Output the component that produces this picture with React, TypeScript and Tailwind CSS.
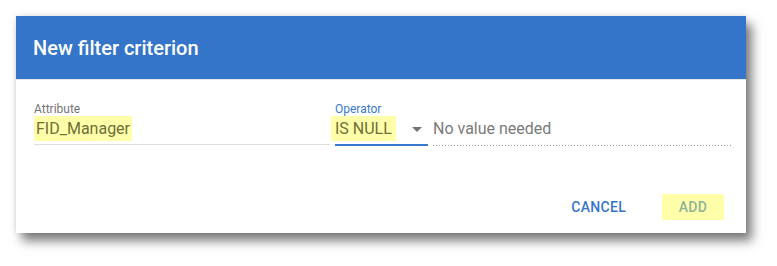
export default function App() {
  return (
    <div className="h-[266px] w-[777px] bg-white pl-[16px] pt-[16px] font-['Roboto',sans-serif]">
      <div className="flex h-[217px] w-[730px] flex-col bg-white shadow-[6px_8px_10px_rgba(0,0,0,0.5),0_0_6px_rgba(0,0,0,0.12)]">
        {/* header */}
        <div className="flex h-[64px] items-center border-b border-[#e6e6e6] bg-[#3575c9] pl-[17px]">
          <h2 className="text-[20px] font-medium text-white">New filter criterion</h2>
        </div>

        {/* fields */}
        <div className="flex gap-[5px] pl-[18px] pt-[22px]">
          <div className="w-[296px]">
            <div className="text-[12px] leading-[14px] text-[#757575]">Attribute</div>
            <div className="h-[29px] border-b border-[#dedede]">
              <span className="inline-block h-[25px] bg-[#ffffaa] px-[2px] text-[16px] leading-[25px] text-[#6e6e38]">
                FID_Manager
              </span>
            </div>
          </div>

          <div className="w-[93px]">
            <div className="text-[12px] leading-[14px] text-[#3a78d0]">Operator</div>
            <div className="flex h-[30px] items-start justify-between border-b-2 border-[#3a78d0]">
              <span className="-ml-[4px] inline-block h-[25px] bg-[#ffffaa] px-[4px] text-[16px] leading-[25px] text-[#6e6e38]">
                IS NULL
              </span>
              <svg width="10" height="5" viewBox="0 0 10 5" className="mr-[6px] mt-[11px]">
                <path d="M0 0 L10 0 L5 5 Z" fill="#757575" />
              </svg>
            </div>
          </div>

          <div className="w-[298px]">
            <div className="h-[14px]" />
            <div className="h-[29px] text-[16px] leading-[25px] text-[#7a7a7a]">No value needed</div>
            <div className="h-[1px] bg-[linear-gradient(to_right,#9e9e9e_1px,transparent_1px)] bg-[length:3px_1px]" />
          </div>
        </div>

        {/* actions */}
        <div className="mt-auto flex items-center justify-end gap-[20px] pb-[13px] pr-[22px]">
          <button className="h-[26px] px-[16px] text-[14px] font-medium tracking-[0.3px] text-[#3575c9]">
            CANCEL
          </button>
          <button className="h-[26px] w-[62px] bg-[#ffffaa] text-[14px] font-medium tracking-[0.3px] text-[#8fb39a]">
            ADD
          </button>
        </div>
      </div>
    </div>
  );
}
